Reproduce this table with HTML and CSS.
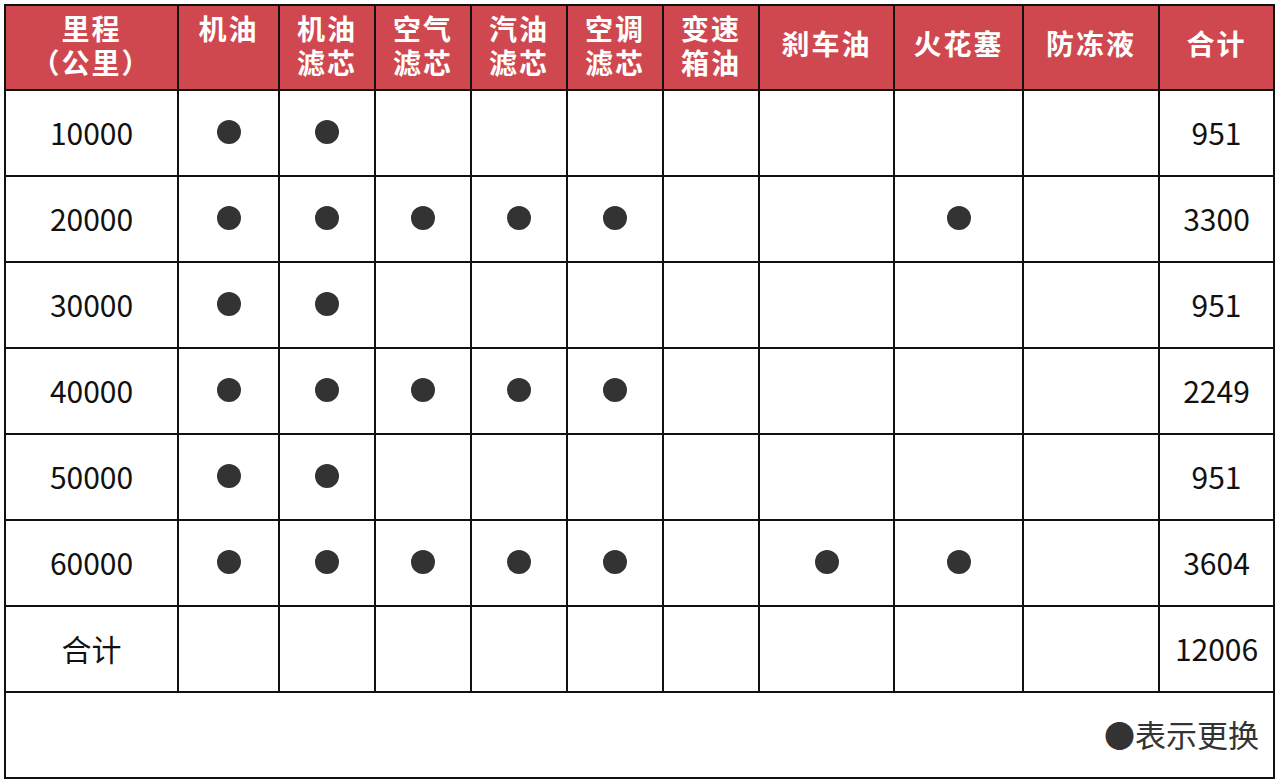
FILE: index.html
```html
<!DOCTYPE html>
<html lang="zh">
<head>
<meta charset="utf-8">
<link rel="stylesheet" href="styles.css">
<title>保养表</title>
</head>
<body>
<table class="plan">
  <colgroup>
    <col class="c-km"><col class="c-a"><col class="c-b"><col class="c-b"><col class="c-b"><col class="c-b"><col class="c-b"><col class="c-c"><col class="c-d"><col class="c-e"><col class="c-f">
  </colgroup>
  <thead>
    <tr>
      <th><span class="ln">里程</span><span class="ln">（公里）</span></th>
      <th><span class="ln">机油</span></th>
      <th><span class="ln">机油</span><span class="ln">滤芯</span></th>
      <th><span class="ln">空气</span><span class="ln">滤芯</span></th>
      <th><span class="ln">汽油</span><span class="ln">滤芯</span></th>
      <th><span class="ln">空调</span><span class="ln">滤芯</span></th>
      <th><span class="ln">变速</span><span class="ln">箱油</span></th>
      <th class="mid">刹车油</th>
      <th class="mid">火花塞</th>
      <th class="mid">防冻液</th>
      <th class="mid">合计</th>
    </tr>
  </thead>
  <tbody>
    <tr><td>10000</td><td><span class="dot"></span></td><td><span class="dot"></span></td><td></td><td></td><td></td><td></td><td></td><td></td><td></td><td>951</td></tr>
    <tr><td>20000</td><td><span class="dot"></span></td><td><span class="dot"></span></td><td><span class="dot"></span></td><td><span class="dot"></span></td><td><span class="dot"></span></td><td></td><td></td><td><span class="dot"></span></td><td></td><td>3300</td></tr>
    <tr><td>30000</td><td><span class="dot"></span></td><td><span class="dot"></span></td><td></td><td></td><td></td><td></td><td></td><td></td><td></td><td>951</td></tr>
    <tr><td>40000</td><td><span class="dot"></span></td><td><span class="dot"></span></td><td><span class="dot"></span></td><td><span class="dot"></span></td><td><span class="dot"></span></td><td></td><td></td><td></td><td></td><td>2249</td></tr>
    <tr><td>50000</td><td><span class="dot"></span></td><td><span class="dot"></span></td><td></td><td></td><td></td><td></td><td></td><td></td><td></td><td>951</td></tr>
    <tr><td>60000</td><td><span class="dot"></span></td><td><span class="dot"></span></td><td><span class="dot"></span></td><td><span class="dot"></span></td><td><span class="dot"></span></td><td></td><td><span class="dot"></span></td><td><span class="dot"></span></td><td></td><td>3604</td></tr>
    <tr><td>合计</td><td></td><td></td><td></td><td></td><td></td><td></td><td></td><td></td><td></td><td>12006</td></tr>
    <tr><td class="note" colspan="11">●表示更换</td></tr>
  </tbody>
</table>
</body>
</html>
```
FILE: styles.css
```css
html, body {
  margin: 0;
  padding: 0;
  background: #ffffff;
}
body {
  padding: 4px 0 0 4px;
  font-family: "Noto Sans CJK SC", "Noto Sans", sans-serif;
}
.plan {
  border-collapse: collapse;
  table-layout: fixed;
  width: 1270px;
  border: 2px solid #444;
}
.c-km { width: 173px; }
.c-a { width: 101px; }
.c-b { width: 96px; }
.c-c { width: 135px; }
.c-d { width: 129px; }
.c-e { width: 136px; }
.c-f { width: 115px; }

.plan th, .plan td {
  border: 2px solid #111;
  padding: 0;
  text-align: center;
}
.plan th {
  background: #d0484f;
  color: #ffffff;
  font-weight: 700;
  font-size: 28px;
  letter-spacing: 2px;
  height: 85px;
  vertical-align: top;
  padding-top: 8px;
  box-sizing: border-box;
}
.plan th .ln {
  display: block;
  height: 34px;
  line-height: 28px;
  overflow: visible;
}
.plan th.mid {
  vertical-align: middle;
  padding-top: 0;
  padding-bottom: 10px;
  line-height: 30px;
}
.plan td {
  height: 86px;
  font-size: 30px;
  line-height: 36px;
  color: #111;
  vertical-align: middle;
  box-sizing: border-box;
  padding-bottom: 2px;
}
.dot {
  display: block;
  width: 24px;
  height: 24px;
  margin: 0 auto;
  border-radius: 50%;
  background: #333333;
}
.plan td.note {
  text-align: right;
  padding-right: 14px;
  color: #333;
  font-size: 31px;
}
```
